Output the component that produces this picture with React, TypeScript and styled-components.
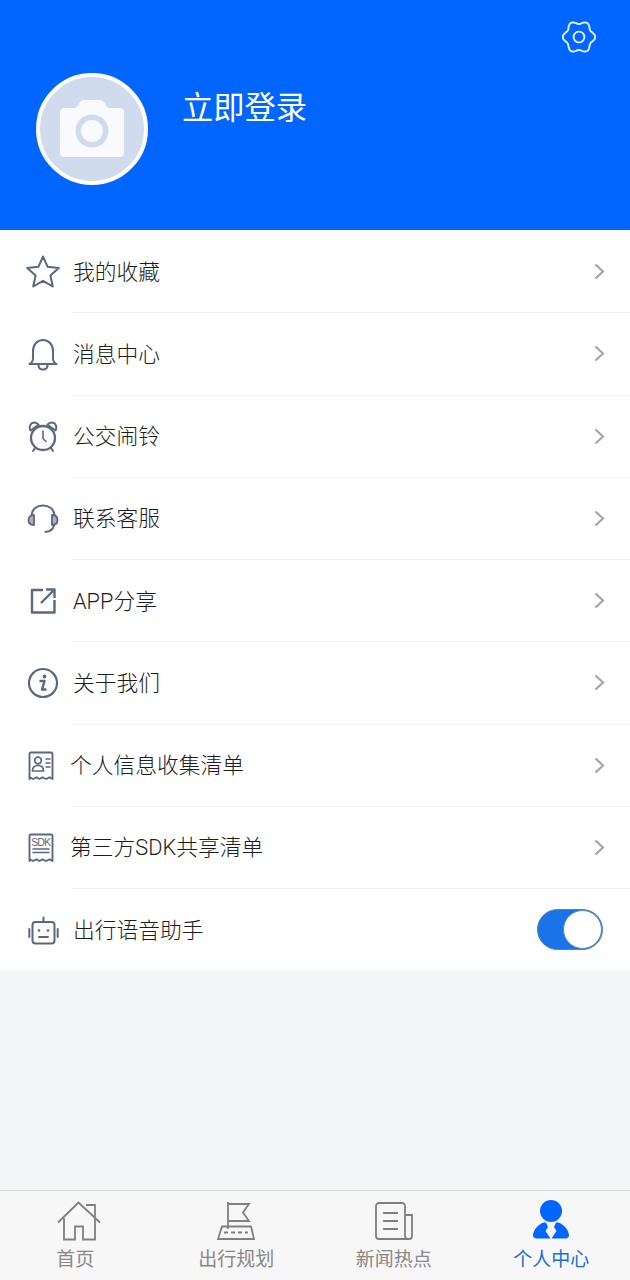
import React from "react";
import styled, { createGlobalStyle } from "styled-components";

const GlobalStyle = createGlobalStyle`
  html, body {
    margin: 0;
    padding: 0;
    background: #f3f6f7;
    font-family: Roboto, "Noto Sans CJK SC", sans-serif;
  }
  * {
    box-sizing: border-box;
  }
`;

const Page = styled.div`
  display: flex;
  flex-direction: column;
  width: 630px;
  height: 1280px;
  overflow: hidden;
  background: #f3f6f7;
`;

const Header = styled.header`
  display: flex;
  flex-direction: column;
  height: 230px;
  padding: 20px 34px 0 36px;
  background: #0066ff;
`;

const SettingsButton = styled.div`
  display: flex;
  justify-content: flex-end;
  height: 53px;
`;

const Profile = styled.div`
  display: flex;
  align-items: flex-start;
  gap: 34px;
`;

const Avatar = styled.div`
  display: flex;
  align-items: center;
  justify-content: center;
  width: 112px;
  height: 112px;
  border: 4px solid #fff;
  border-radius: 50%;
  background: #d0dcee;
`;

const LoginText = styled.div`
  padding-top: 13px;
  color: #fff;
  font-size: 31.25px;
  line-height: 46px;
`;

const Menu = styled.div`
  height: 740px;
  padding-top: 1px;
  overflow: hidden;
  background: #fff;
`;

const Row = styled.div`
  display: flex;
  align-items: stretch;
  height: 82.25px;
  padding-left: 25px;
`;

const IconSlot = styled.div`
  display: flex;
  align-items: center;
  justify-content: center;
  flex: none;
  width: 36px;
  margin-right: 11px;
  color: #5b687f;
`;

const RowBody = styled.div<{ $last?: boolean }>`
  display: flex;
  flex: 1;
  align-items: center;
  justify-content: space-between;
  padding-right: 25px;
  border-bottom: ${(p) => (p.$last ? "0" : "1px solid #f0f1f3")};
`;

const Label = styled.span<{ $shift: number }>`
  margin-left: ${(p) => p.$shift}px;
  padding-top: 2px;
  color: #1c1c1c;
  font-size: 21.75px;
  font-weight: 300;
  line-height: 30px;
`;

const Toggle = styled.div`
  display: flex;
  justify-content: flex-end;
  width: 66px;
  height: 41px;
  margin: 0 2px 2px 0;
  border: 1px solid #4b86c4;
  border-radius: 21px;
  background: #1a73e8;
`;

const Knob = styled.div`
  width: 39px;
  height: 39px;
  border: 1px solid #5f8a9e;
  border-radius: 50%;
  background: #fff;
`;

const Spacer = styled.div`
  flex: 1;
`;

const TabBar = styled.nav`
  display: grid;
  grid-template-columns: repeat(4, 1fr);
  height: 90px;
  border-top: 1px solid #d6d9da;
  background: #f7f7f7;
`;

const Tab = styled.div<{ $active?: boolean }>`
  display: flex;
  flex-direction: column;
  align-items: center;
  padding-top: 8px;
  color: ${(p) => (p.$active ? "#1a6fd6" : "#888")};
  font-size: 19px;
  line-height: 26px;
`;

const TabIcon = styled.div`
  display: flex;
  align-items: center;
  justify-content: center;
  height: 44px;
  margin-bottom: 4px;
`;

const TabLabel = styled.span<{ $nudge?: number }>`
  margin-right: ${(p) => p.$nudge || 0}px;
`;

// six soft lobes, r = 14.6 + 1.6 cos(6t)
const gearOutline = Array.from({ length: 120 }, (_, i) => {
  const t = (i / 120) * Math.PI * 2;
  const r = 14.6 + 1.6 * Math.cos(6 * t);
  return `${(17 + r * Math.cos(t)).toFixed(2)},${(17 + r * Math.sin(t)).toFixed(2)}`;
}).join(" ");

const Settings = () => (
  <svg width="34" height="34" viewBox="0 0 34 34" fill="none" stroke="#e6f0ff" strokeWidth="1.9">
    <polygon points={gearOutline} strokeLinejoin="round" />
    <circle cx="17" cy="17" r="5.400" />
  </svg>
);

const Camera = () => (
  <svg width="64" height="58" viewBox="0 0 64 58">
    <path
      d="M4 8h10c2 0 3-.5 4-2.500C19.500 2 21 0 25 0h14c4 0 5.500 2 7 5.500 1 2 2 2.500 4 2.500h10c2.500 0 4 1.500 4 4v41c0 2.500-1.500 4-4 4H4c-2.500 0-4-1.500-4-4V12c0-2.500 1.500-4 4-4z"
      fill="#f8fafd"
    />
    <circle cx="32" cy="31" r="13.700" fill="none" stroke="#d0dcee" strokeWidth="5.500" />
  </svg>
);

const line = { fill: "none", stroke: "currentColor", strokeWidth: 2, strokeLinecap: "round", strokeLinejoin: "round" } as const;

const Star = () => (
  <svg width="36" height="36" viewBox="0 1 36 36" {...line}>
    <path d="M18 3.500l4.600 10.300 11.200 1.200-8.400 7.500 2.400 11-9.800-5.700-9.800 5.700 2.400-11L2.200 15l11.200-1.200z" />
  </svg>
);

const Bell = () => (
  <svg width="30" height="33" viewBox="0 0 30 33" {...line}>
    <path d="M1.500 26h27C26 25 25 23 25 20v-7C25 7 21 2 15 2S5 7 5 13v7c0 3-1 5-3.500 6z" />
    <path d="M10.500 27c0 3.500 2 4.500 4.500 4.500s4.500-1 4.500-4.500" />
  </svg>
);

const Alarm = () => (
  <svg width="30" height="32" viewBox="0 0 30 32" {...line}>
    <circle cx="15" cy="17" r="12" strokeWidth="2.300" />
    <path d="M15 10v7.500l3 3" strokeWidth="1.600" />
    <path d="M2.500 9.500C.5 6 2.500 1.500 6.500 1.500c1.800 0 3 .8 4 2.200z" />
    <path d="M27.500 9.500C29.500 6 27.500 1.500 23.500 1.500c-1.800 0-3 .8-4 2.200z" />
    <path d="M7 27l-2 3M23 27l2 3" />
  </svg>
);

const Headset = () => (
  <svg width="32" height="30" viewBox="0 0 32 30" {...line}>
    <path d="M4.500 11C5 5 10 1.500 16 1.500S27 5 27.500 11v7c0 6-3.500 9.500-9 10" />
    <path d="M7 11C3.500 11 1.500 13 1.500 16s2 5 5.500 5z" fill="#a9b2c0" strokeWidth="1.800" />
    <path d="M25 11c3.500 0 5.500 2 5.500 5s-2 5-5.500 5z" fill="#a9b2c0" strokeWidth="1.800" />
  </svg>
);

const Share = () => (
  <svg width="26" height="26" viewBox="0 0 26 26" {...line} strokeWidth="2.400" strokeLinecap="butt">
    <path d="M13 2H2v22.500h22.500V12" />
    <path d="M11 15L24 2M16 1.500h8.500V10" />
  </svg>
);

const Info = () => (
  <svg width="32" height="32" viewBox="0 0 32 32" {...line}>
    <circle cx="16" cy="16" r="14" strokeWidth="2.200" />
    <circle cx="17.500" cy="9.500" r="1.900" fill="currentColor" stroke="none" />
    <path d="M13.500 14h4L15 22.500h3.500" strokeWidth="2.400" />
  </svg>
);

const ReceiptSvg = styled.svg`
  margin-right: 4px;
`;

const Receipt = ({ children }: { children: React.ReactNode }) => (
  <ReceiptSvg width="26" height="30" viewBox="0 0 26 30" {...line} strokeWidth="1.900">
    <path d="M1.500 28V3c0-1 .5-1.500 1.500-1.500h20c1 0 1.500.5 1.500 1.500v25l-3-1.700-3.500 1.700-3.500-1.700-3 1.700-3-1.700-3.500 1.700-3-1.700z" />
    {children}
  </ReceiptSvg>
);

const Contact = () => (
  <Receipt>
    <circle cx="10" cy="9.500" r="3.300" strokeWidth="1.700" />
    <path d="M4.500 20c0-3.500 2.300-5.500 5.500-5.500s5.500 2 5.500 5.500z" strokeWidth="1.700" />
    <path d="M18 8h4M18 12h4M18 16h4" strokeWidth="1.500" />
  </Receipt>
);

const SdkText = styled.text`
  fill: currentColor;
  stroke: none;
  font-family: "Liberation Sans", sans-serif;
  font-size: 10.500px;
  letter-spacing: -0.9px;
`;

const Sdk = () => (
  <Receipt>
    <SdkText x="12.700" y="12.500" textAnchor="middle">SDK</SdkText>
    <path d="M5 16h16M5 19.500h16" strokeWidth="1.500" />
  </Receipt>
);

const Robot = () => (
  <svg width="31" height="29" viewBox="0 0 31 29" {...line}>
    <rect x="4.500" y="6" width="22" height="21.500" rx="3" />
    <path d="M15.500 1.500V6M1.300 13v8M29.700 13v8" />
    <circle cx="11" cy="14.500" r="1.300" fill="currentColor" stroke="none" />
    <circle cx="20" cy="14.500" r="1.300" fill="currentColor" stroke="none" />
    <path d="M11 21h9" />
  </svg>
);

const Chevron = () => (
  <svg width="11" height="17" viewBox="0 0 11 17" fill="none" stroke="#a6a6a6" strokeWidth="2.200">
    <path d="M1.500 1.500L9 8.500l-7.500 7" />
  </svg>
);

const tabLine = { fill: "none", stroke: "#808080", strokeWidth: 1.8 };

const HomeIcon = () => (
  <svg width="44" height="40" viewBox="0 0 44 40" {...tabLine}>
    <path d="M1 21.500L21.500 1.500 43 21.500" />
    <path d="M29 4h9v12" />
    <path d="M7 17v21.500h11V25.500h8v13h12V17" />
  </svg>
);

const RouteIcon = () => (
  <svg width="40" height="40" viewBox="0 0 40 40" {...tabLine}>
    <path d="M12 1v27" />
    <path d="M12 3h21l-6 8.500 6 8.500H12" />
    <path d="M6 25.500h29l3 12.500H2z" />
    <path d="M8 31.500h24" strokeDasharray="4 3" />
  </svg>
);

const NewsIcon = () => (
  <svg width="38" height="38" viewBox="0 0 38 38" {...tabLine}>
    <path d="M30 29V4c0-1.800-1.200-3-3-3H4C2.200 1 1 2.200 1 4v30c0 1.800 1.200 3 3 3h30c1.800 0 3-1.200 3-3V13h-7v21c0 1.800 1.300 3 3 3" />
    <path d="M8 11h15M8 19h15M8 27h15" />
  </svg>
);

const PersonIcon = () => (
  <svg width="38" height="42" viewBox="0 0 37 42" fill="#0066ff">
    <circle cx="18.500" cy="11" r="11" />
    <path d="M11 22.500C5 25 1 30 .5 35c-.2 2.300 1.300 3.500 3.500 3.500h14L13 31l2.500-4-2-4.500z" />
    <path d="M26 22.500C32 25 36 30 36.500 35c.2 2.300-1.300 3.500-3.500 3.500H19L24 31l-2.500-4 2-4.500z" />
  </svg>
);

const items = [
  { label: "我的收藏", icon: <Star />, shift: 1 },
  { label: "消息中心", icon: <Bell />, shift: 1 },
  { label: "公交闹铃", icon: <Alarm />, shift: 1 },
  { label: "联系客服", icon: <Headset />, shift: 1 },
  { label: "APP分享", icon: <Share />, shift: 1 },
  { label: "关于我们", icon: <Info />, shift: 1 },
  { label: "个人信息收集清单", icon: <Contact />, shift: -2 },
  { label: "第三方SDK共享清单", icon: <Sdk />, shift: -2 },
];

const tabs = [
  { label: "首页", icon: <HomeIcon />, nudge: 7 },
  { label: "出行规划", icon: <RouteIcon /> },
  { label: "新闻热点", icon: <NewsIcon /> },
  { label: "个人中心", icon: <PersonIcon />, active: true },
];

export default function App() {
  return (
    <Page>
      <GlobalStyle />
      <Header>
        <SettingsButton>
          <Settings />
        </SettingsButton>
        <Profile>
          <Avatar>
            <Camera />
          </Avatar>
          <LoginText>立即登录</LoginText>
        </Profile>
      </Header>
      <Menu>
        {items.map((item) => (
          <Row key={item.label}>
            <IconSlot>{item.icon}</IconSlot>
            <RowBody>
              <Label $shift={item.shift}>{item.label}</Label>
              <Chevron />
            </RowBody>
          </Row>
        ))}
        <Row>
          <IconSlot>
            <Robot />
          </IconSlot>
          <RowBody $last>
            <Label $shift={1}>出行语音助手</Label>
            <Toggle>
              <Knob />
            </Toggle>
          </RowBody>
        </Row>
      </Menu>
      <Spacer />
      <TabBar>
        {tabs.map((tab) => (
          <Tab key={tab.label} $active={tab.active}>
            <TabIcon>{tab.icon}</TabIcon>
            <TabLabel $nudge={tab.nudge}>{tab.label}</TabLabel>
          </Tab>
        ))}
      </TabBar>
    </Page>
  );
}
